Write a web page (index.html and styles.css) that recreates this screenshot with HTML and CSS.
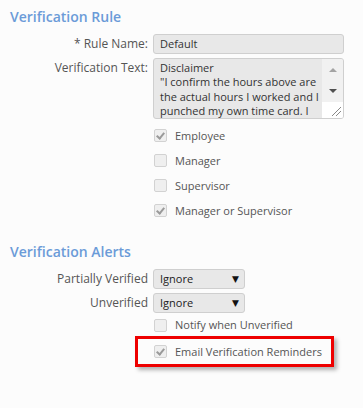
FILE: index.html
```html
<!DOCTYPE html>
<html>
<head>
<meta charset="utf-8">
<link rel="stylesheet" href="styles.css">
</head>
<body>
<div class="page">
  <h2 class="title">Verification Rule</h2>
  <div class="row">
    <div class="label">* Rule Name:</div>
    <div class="input">Default</div>
  </div>
  <div class="row row-top">
    <div class="label">Verification Text:</div>
    <div class="textarea">
      <div class="ta-text">Disclaimer<br>"I confirm the hours above are<br>the actual hours I worked and I<br>punched my own time card. I</div>
      <div class="ta-bar">
        <div class="ta-track">
          <span class="arr-up"></span>
          <span class="arr-down"></span>
        </div>
        <div class="ta-resize">
          <svg width="16" height="16" viewBox="0 0 16 16"><path d="M5 14 L14 5 M9 14 L14 9" stroke="#888" stroke-width="1" fill="none"/></svg>
        </div>
      </div>
    </div>
  </div>
  <div class="checks">
    <div class="check"><span class="box on"></span><span>Employee</span></div>
    <div class="check"><span class="box"></span><span>Manager</span></div>
    <div class="check"><span class="box"></span><span>Supervisor</span></div>
    <div class="check"><span class="box on"></span><span>Manager or Supervisor</span></div>
  </div>

  <h2 class="title title2">Verification Alerts</h2>
  <div class="row">
    <div class="label">Partially Verified</div>
    <div class="select"><span>Ignore</span><span class="caret">&#9660;</span></div>
  </div>
  <div class="row row-sel2">
    <div class="label">Unverified</div>
    <div class="select"><span>Ignore</span><span class="caret">&#9660;</span></div>
  </div>
  <div class="checks">
    <div class="check check-notify"><span class="box"></span><span>Notify when Unverified</span></div>
  </div>
  <div class="highlight">
    <div class="check"><span class="box on"></span><span>Email Verification Reminders</span></div>
  </div>
</div>
</body>
</html>
```
FILE: styles.css
```css
html, body {
  margin: 0;
  padding: 0;
  background: #fcfcfc;
}
body {
  font-family: "Open Sans", "DejaVu Sans", sans-serif;
  font-size: 12px;
  color: #555;
}
.page {
  padding-top: 7px;
  width: 363px;
  height: 408px;
  box-sizing: border-box;
  overflow: hidden;
}
.title {
  margin: 0 0 7px 10px;
  font-size: 14px;
  font-weight: 600;
  line-height: 20px;
  color: #6b9bd8;
}
.title2 {
  margin-top: 19px;
}
.row {
  display: grid;
  grid-template-columns: 148px 191px;
  column-gap: 5px;
  align-items: center;
  margin-bottom: 4px;
}
.row-top {
  align-items: start;
}
.row-top .label {
  padding-top: 1px;
}
.label {
  text-align: right;
  line-height: 18px;
  white-space: nowrap;
}
.input {
  height: 20px;
  box-sizing: border-box;
  border: 1px solid #cfcfcf;
  border-radius: 3px;
  background: #e8e8e8;
  color: #333;
  padding-left: 6px;
  font-size: 11px;
  line-height: 18px;
}
.textarea {
  height: 61px;
  box-sizing: border-box;
  border: 1px solid #cfcfcf;
  border-radius: 3px;
  background: #e8e8e8;
  display: flex;
  overflow: hidden;
}
.ta-text {
  flex: 1;
  color: #333;
  padding: 2px 0 0 6px;
  font-size: 11px;
  line-height: 14.3px;
  white-space: nowrap;
  overflow: hidden;
}
.ta-bar {
  width: 21px;
  display: flex;
  flex-direction: column;
  background: #f1f1f1;
}
.ta-track {
  flex: 1;
  display: flex;
  flex-direction: column;
  align-items: center;
  justify-content: space-between;
  padding: 9px 0 9px;
}
.arr-up {
  width: 0;
  height: 0;
  border-left: 4px solid transparent;
  border-right: 4px solid transparent;
  border-bottom: 4px solid #a3a3a3;
}
.arr-down {
  width: 0;
  height: 0;
  border-left: 4px solid transparent;
  border-right: 4px solid transparent;
  border-top: 4px solid #505050;
}
.ta-resize {
  height: 16px;
  background: #fff;
  display: flex;
  justify-content: flex-end;
  align-items: flex-end;
}
.ta-resize svg {
  display: block;
}
.checks {
  margin-left: 154px;
}
.check {
  display: flex;
  align-items: center;
  height: 25px;
  font-size: 11px;
  line-height: 18px;
  white-space: nowrap;
}
.box {
  width: 13px;
  height: 13px;
  box-sizing: border-box;
  border: 1px solid #d2d2d2;
  border-radius: 2px;
  background: #efefef;
  margin-right: 8px;
  flex: none;
  position: relative;
}
.box.on::after {
  content: "";
  position: absolute;
  left: 3px;
  top: 1px;
  width: 3px;
  height: 6px;
  border-right: 2px solid #9a9a9a;
  border-bottom: 2px solid #9a9a9a;
  transform: rotate(40deg);
}
.select {
  width: 92px;
  height: 20px;
  box-sizing: border-box;
  border: 1px solid #cfcfcf;
  border-radius: 3px;
  background: #e8e8e8;
  color: #222;
  padding: 0 5px 0 6px;
  font-size: 11px;
  line-height: 18px;
  display: flex;
  justify-content: space-between;
  align-items: center;
}
.caret {
  font-size: 9px;
  color: #111;
}
.row-sel2 {
  margin-bottom: 1px;
}
.check-notify {
  height: 22px;
}
.highlight {
  margin-left: 135px;
  width: 199px;
  height: 31px;
  box-sizing: border-box;
  border: 3px solid #ee0000;
  padding-left: 16px;
  box-shadow: 3px 3px 4px rgba(0, 0, 0, 0.3);
  display: flex;
  align-items: center;
}
.highlight .check {
  height: 25px;
}
```
